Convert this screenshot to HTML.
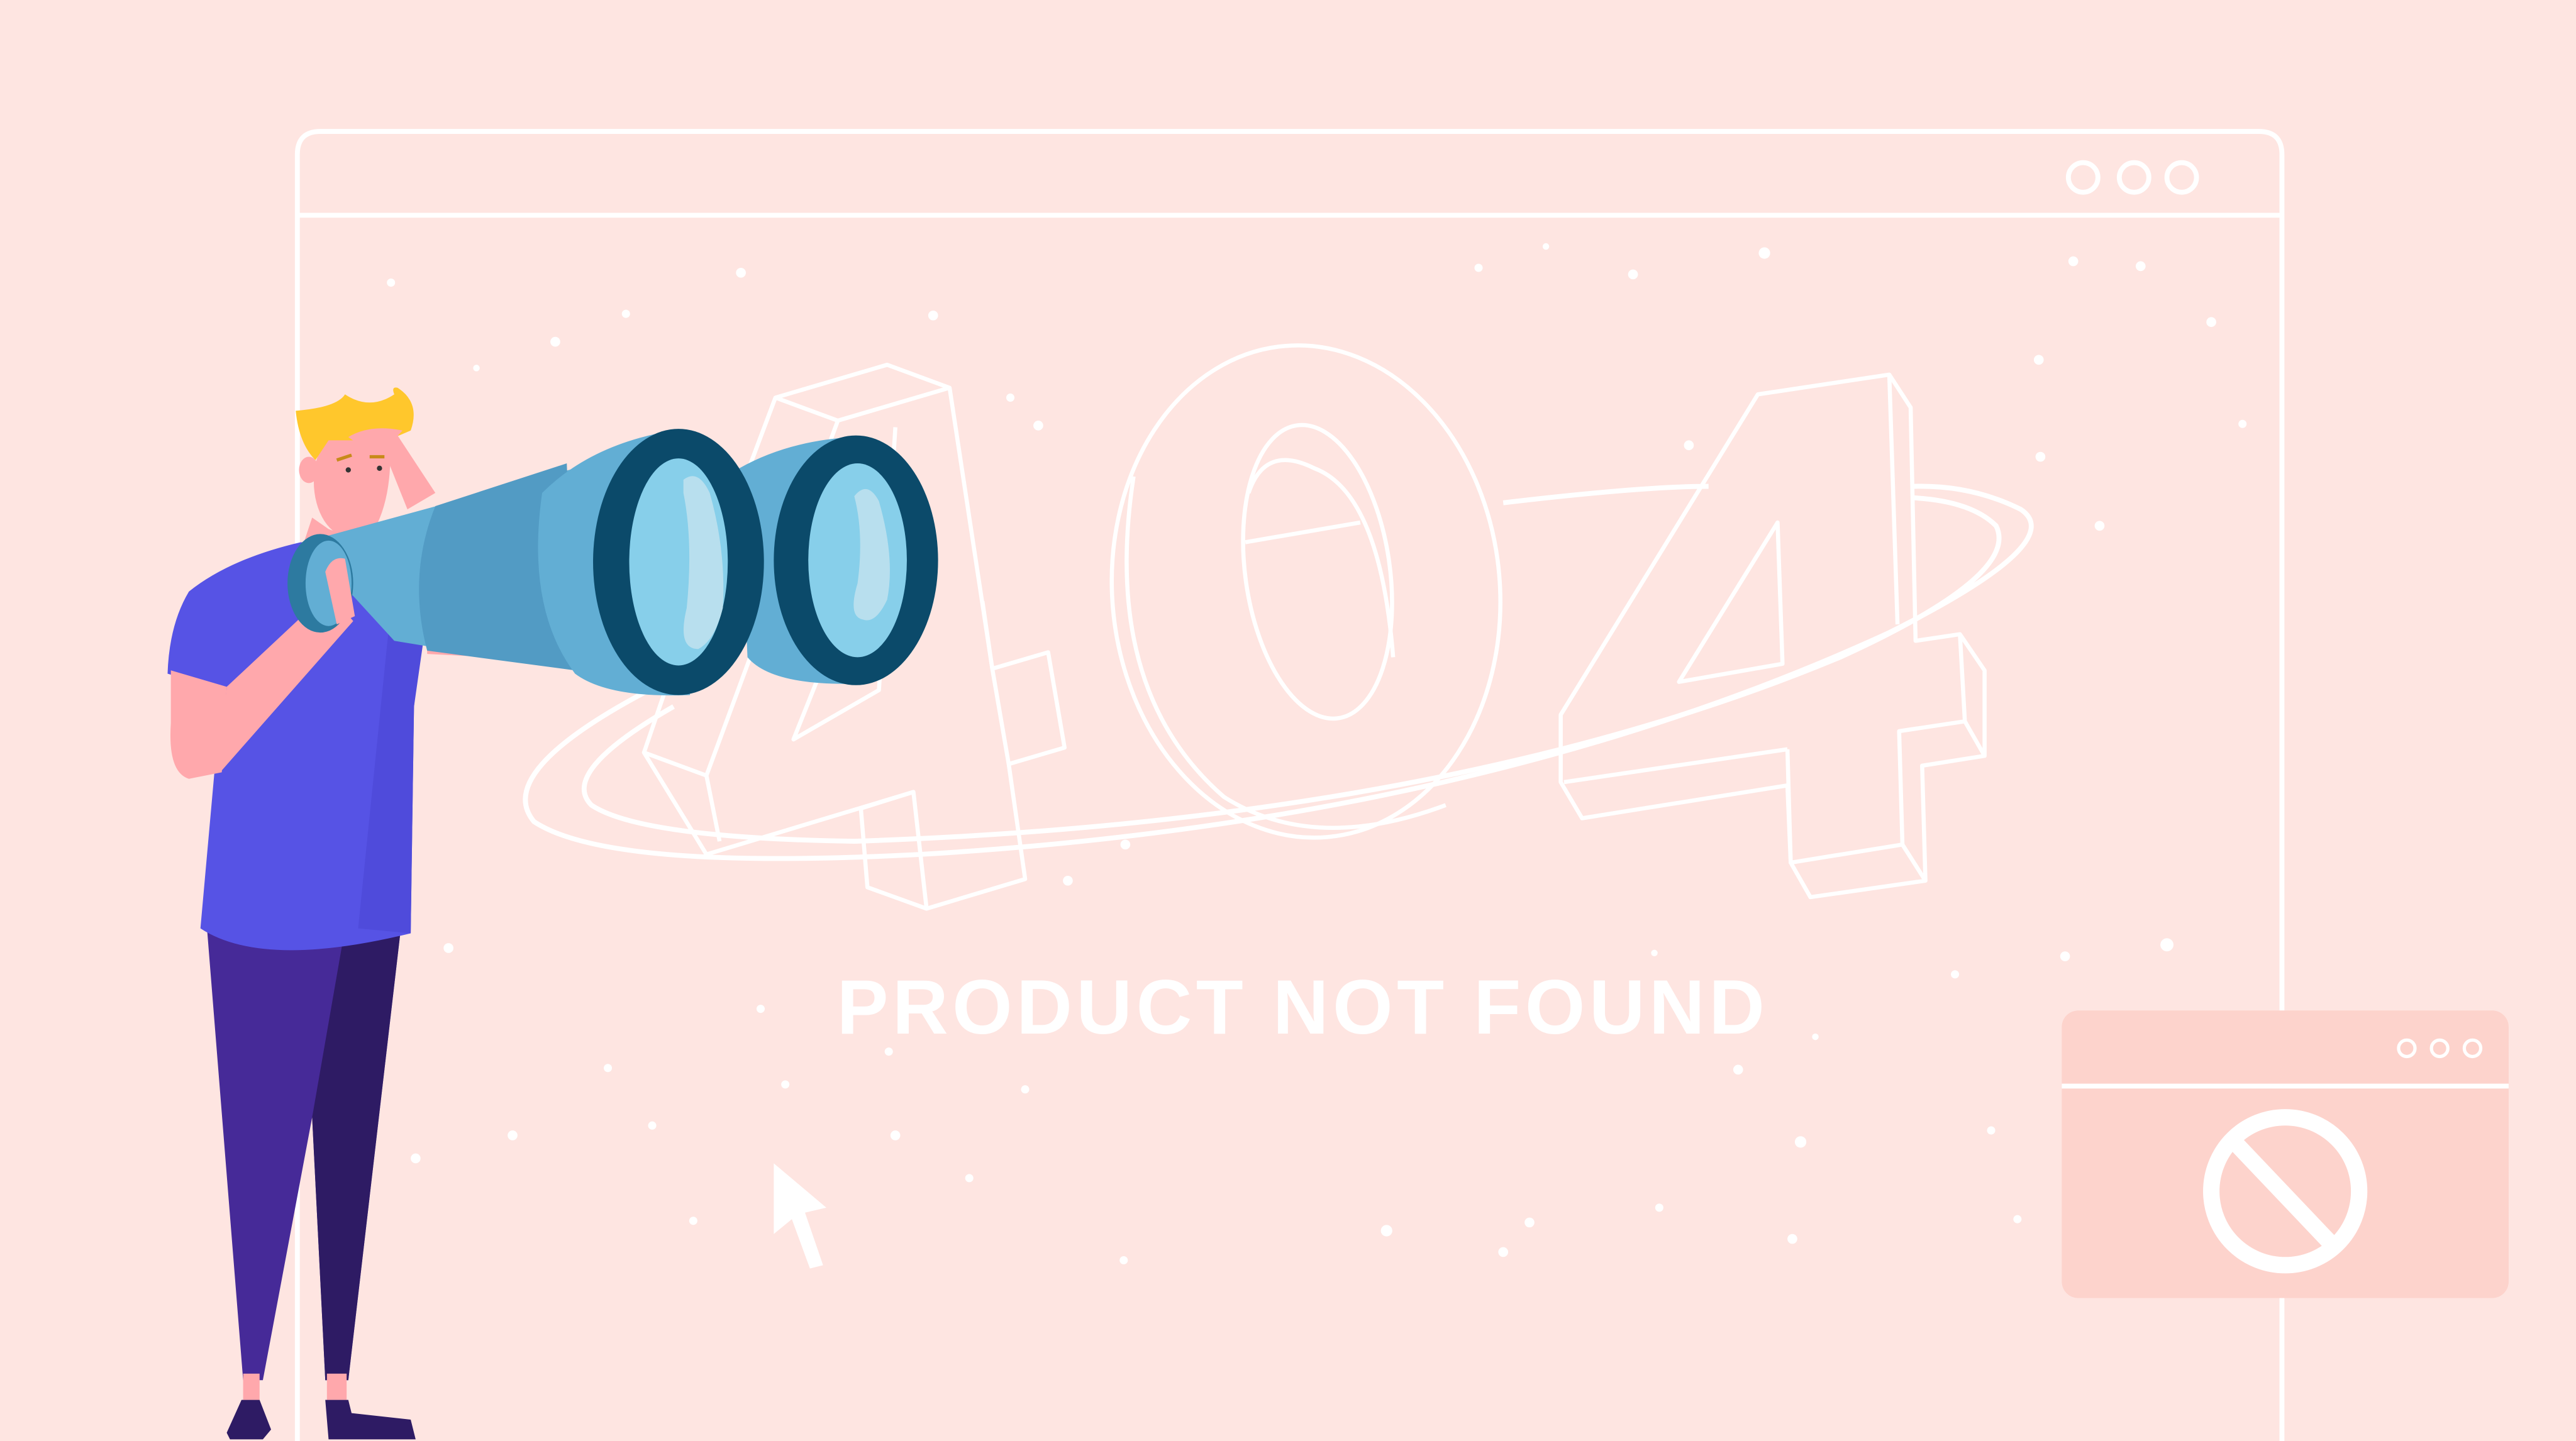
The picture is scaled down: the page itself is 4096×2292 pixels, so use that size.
<!DOCTYPE html>
<html><head><meta charset="utf-8"><style>
html,body{margin:0;padding:0;background:#fee5e1;overflow:hidden}
svg{display:block}
</style></head><body>
<svg width="4096" height="2292" viewBox="0 0 1568 877" preserveAspectRatio="none" xmlns="http://www.w3.org/2000/svg">
<rect width="1568" height="877" fill="#fee5e1"/>
<path d="M181 890 V94 Q181 80 195 80 H1375 Q1389 80 1389 94 V890" fill="none" stroke="#fff" stroke-width="3"/>
<line x1="181" y1="131" x2="1389" y2="131" stroke="#fff" stroke-width="3"/>
<g fill="none" stroke="#fff" stroke-width="3"><circle cx="1268" cy="108" r="9"/><circle cx="1299" cy="108" r="9"/><circle cx="1328" cy="108" r="9"/></g>
<g fill="#fff">
<circle cx="238" cy="172" r="2.5"/><circle cx="451" cy="166" r="3"/><circle cx="381" cy="191" r="2.5"/><circle cx="338" cy="208" r="3"/><circle cx="290" cy="224" r="2"/><circle cx="568" cy="192" r="3"/><circle cx="615" cy="242" r="2.5"/><circle cx="632" cy="259" r="3"/><circle cx="900" cy="163" r="2.5"/><circle cx="941" cy="150" r="2"/><circle cx="994" cy="167" r="3"/><circle cx="1074" cy="154" r="3.5"/><circle cx="1262" cy="159" r="3"/><circle cx="1303" cy="162" r="3"/><circle cx="1346" cy="196" r="3"/><circle cx="1241" cy="219" r="3"/><circle cx="1365" cy="258" r="2.5"/><circle cx="1242" cy="278" r="3"/><circle cx="1028" cy="271" r="3"/><circle cx="1278" cy="320" r="3"/><circle cx="685" cy="514" r="3"/><circle cx="650" cy="536" r="3"/><circle cx="273" cy="577" r="3"/><circle cx="1007" cy="580" r="2"/><circle cx="1190" cy="593" r="2.5"/><circle cx="1257" cy="582" r="3"/><circle cx="1319" cy="575" r="4"/><circle cx="463" cy="614" r="2.5"/><circle cx="541" cy="640" r="2.5"/><circle cx="1105" cy="631" r="2"/><circle cx="1058" cy="651" r="3"/><circle cx="370" cy="650" r="2.5"/><circle cx="478" cy="660" r="2.5"/><circle cx="624" cy="663" r="2.5"/><circle cx="397" cy="685" r="2.5"/><circle cx="312" cy="691" r="3"/><circle cx="545" cy="691" r="3"/><circle cx="1096" cy="695" r="3.5"/><circle cx="1212" cy="688" r="2.5"/><circle cx="253" cy="705" r="3"/><circle cx="590" cy="717" r="2.5"/><circle cx="1010" cy="735" r="2.5"/><circle cx="422" cy="743" r="2.5"/><circle cx="931" cy="744" r="3"/><circle cx="844" cy="749" r="3.5"/><circle cx="1091" cy="754" r="3"/><circle cx="915" cy="762" r="3"/><circle cx="1228" cy="742" r="2.5"/><circle cx="684" cy="767" r="2.5"/>
</g>
<g fill="none" stroke="#fff" stroke-width="2.5" stroke-linejoin="round">
<path d="M472 242 L540 222 L578 236 L604 407 L638 397 L648 455 L614 465 L624 535 L564 553 L556 482 L430 520 L392 458 L405 420 Z"/>
<path d="M472 242 L510 256 L578 236 M510 256 L430 472 L392 458 M430 472 L438 512 M556 482 L524 492 L528 540 L564 553 M604 407 L598 366 M614 465 L604 407"/>
<path d="M545 260 L535 420 L483 450 L505 395"/>
<ellipse cx="795" cy="360" rx="118" ry="150" transform="rotate(-5 795 360)"/>
<path d="M690 290 Q670 420 745 485 Q800 520 880 490"/>
<ellipse cx="802" cy="348" rx="44" ry="90" transform="rotate(-8 802 348)"/>
<path d="M760 300 Q770 270 800 285 Q840 300 848 400"/>
<line x1="758" y1="330" x2="828" y2="318"/>
<path d="M1070 240 L1150 228 L1163 248 L1166 390 L1193 386 L1208 408 L1208 460 L1170 466 L1172 536 L1102 546 L1090 525 L1088 478 L963 498 L950 476 L950 435 Z"/>
<path d="M1150 228 L1155 380 M1088 456 L952 476 M1088 456 L1090 525 L1158 514 L1172 536 M1158 514 L1156 445 L1196 439 L1208 460 M1193 386 L1196 439"/>
<path d="M1082 318 L1085 404 L1022 415 Z"/>
</g>
<g fill="none" stroke="#fff" stroke-width="3">
<path d="M395 420 Q300 470 325 500 Q370 530 560 520 Q900 500 1150 385 Q1260 330 1230 310 Q1200 295 1165 296"/>
<path d="M410 430 Q340 470 360 490 Q390 510 520 512 Q880 500 1120 400 Q1230 350 1215 320 Q1200 305 1165 303"/>
<path d="M915 306 Q1000 296 1040 296"/>
</g>
<text x="793" y="629" text-anchor="middle" font-family="Liberation Sans, sans-serif" font-weight="bold" font-size="47" fill="#fff" letter-spacing="2.5">PRODUCT NOT FOUND</text>
<path d="M471 708 L503 735 L490 738 L501 770 L493 772 L482 742 L471 751 Z" fill="#fff"/>
<rect x="1255" y="615" width="272" height="175" rx="10" fill="#fdd3cc"/>
<line x1="1255" y1="661" x2="1527" y2="661" stroke="#fff" stroke-width="3"/>
<g fill="none" stroke="#fff" stroke-width="2"><circle cx="1465" cy="638" r="5"/><circle cx="1485" cy="638" r="5"/><circle cx="1505" cy="638" r="5"/></g>
<circle cx="1391" cy="725" r="45" fill="none" stroke="#fff" stroke-width="10"/>
<line x1="1362" y1="697" x2="1419" y2="757" stroke="#fff" stroke-width="10"/>
<path d="M126 565 L148 840 L160 840 L190 680 L198 840 L212 840 L244 565 Z" fill="#462a98"/>
<path d="M190 680 L198 840 L212 840 L244 565 L210 565 Z" fill="#2e1b64"/>
<rect x="148" y="836" width="10" height="16" fill="#ffa8ac"/><rect x="199" y="836" width="12" height="16" fill="#ffa8ac"/>
<path d="M138 872 L147 852 L158 852 L165 870 L160 876 L140 876 Z" fill="#2e1b64"/>
<path d="M198 852 L212 852 L214 860 L250 864 L253 876 L200 876 Z" fill="#2e1b64"/>
<path d="M183 330 Q140 340 115 360 Q103 380 102 410 L135 420 L122 565 Q160 590 250 568 L252 430 L260 360 L240 330 Z" fill="#5653e5"/>
<path d="M242 330 L218 565 L250 568 L252 430 L262 360 Z" fill="#4f4bdb"/>
<path d="M104 408 L138 418 L135 470 L115 474 Q102 470 104 440 Z" fill="#ffa8ac"/>
<path d="M138 418 L200 360 L215 378 L134 470 Z" fill="#ffa8ac"/>
<path d="M196 262 L237 262 Q240 300 228 322 Q215 328 200 322 L190 315 L185 330 L200 340 L210 330 Z" fill="#ffa8ac"/>
<ellipse cx="213" cy="293" rx="22" ry="34" fill="#ffa8ac"/>
<ellipse cx="188" cy="286" rx="6" ry="8" fill="#ffa8ac"/>
<path d="M180 250 Q205 248 210 240 Q225 250 240 240 Q238 235 242 236 Q256 245 250 262 L236 268 L200 268 L192 280 Q182 270 180 250 Z" fill="#ffc72c"/>
<path d="M240 262 L265 300 L248 310 L232 270 Z" fill="#ffa8ac"/>
<path d="M212 266 Q225 258 245 262 L236 272 Q222 274 212 266 Z" fill="#ffa8ac"/>
<circle cx="212" cy="286" r="1.6" fill="#333"/><circle cx="231" cy="285" r="1.6" fill="#333"/>
<path d="M205 280 L214 277 M225 278 L234 278" stroke="#c88a1a" stroke-width="2"/>
<path d="M260 392 L300 400 L260 398 Z" fill="#ffa8ac"/>
<path d="M185 330 L350 285 L350 408 L240 390 Z" fill="#62aed4"/>
<ellipse cx="195" cy="355" rx="20" ry="30" fill="#2d7aa0"/>
<ellipse cx="200" cy="355" rx="14" ry="26" fill="#62aed4"/>
<path d="M265 308 L345 282 L350 408 L260 396 Q248 350 265 308 Z" fill="#529bc4"/>
<path d="M330 300 Q360 270 410 262 L420 423 Q370 425 350 410 Q320 370 330 300 Z" fill="#62aed4"/>
<path d="M450 285 Q480 268 520 266 L525 416 Q470 418 455 400 Z" fill="#62aed4"/>
<ellipse cx="413" cy="342" rx="52" ry="81" fill="#0b4a6a"/>
<ellipse cx="413" cy="342" rx="30" ry="63" fill="#87cfea"/>
<path d="M416 292 Q425 285 432 300 Q442 335 440 370 Q435 390 425 395 Q412 395 418 370 Q422 330 416 300 Z" fill="#b8dfee"/>
<ellipse cx="521" cy="341" rx="50" ry="76" fill="#0b4a6a"/>
<ellipse cx="522" cy="341" rx="30" ry="59" fill="#87cfea"/>
<path d="M520 302 Q528 292 535 305 Q545 340 540 365 Q533 380 525 377 Q516 375 522 355 Q526 325 520 302 Z" fill="#b8dfee"/>
<path d="M198 348 Q202 338 210 340 L216 375 L205 380 Z" fill="#ffa8ac"/>
</svg>
</body></html>
